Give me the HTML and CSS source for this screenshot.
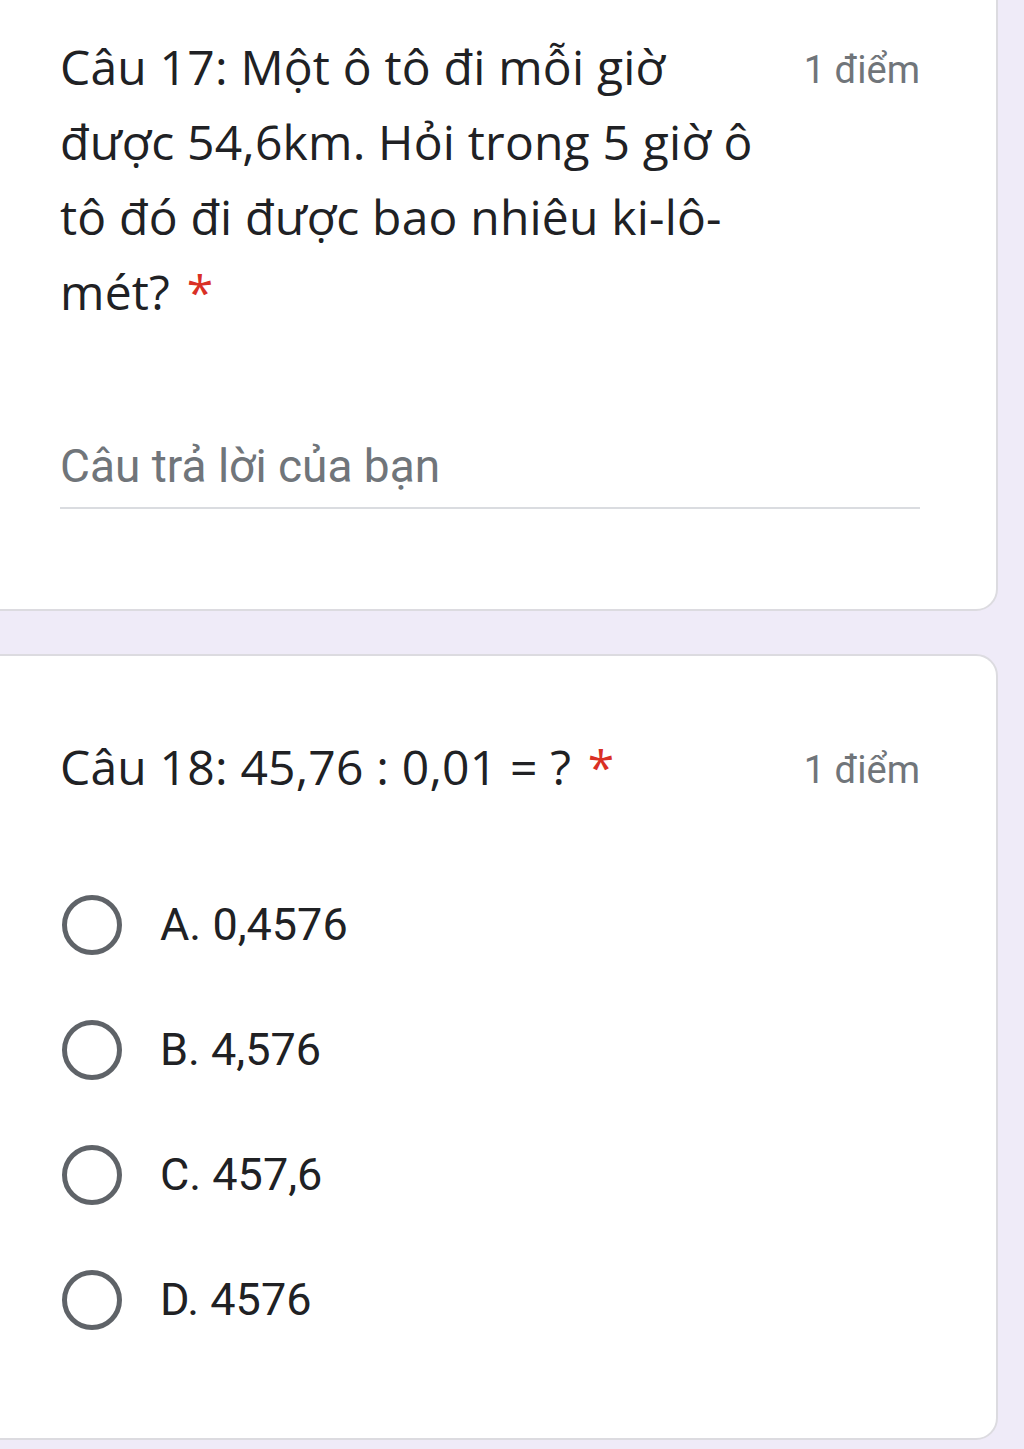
FILE: index.html
```html
<!DOCTYPE html>
<html lang="vi">
<head>
    <meta charset="UTF-8">
    <meta name="viewport" content="width=device-width, initial-scale=1.0">
    <title>Bài kiểm tra</title>
    <link rel="stylesheet" href="styles.css">
</head>
<body>
    <div class="form-list">
        <div class="question-card first">
            <div class="question-head">
                <div class="question-title">Câu 17: Một ô tô đi mỗi giờ được 54,6km. Hỏi trong 5 giờ ô tô đó đi được bao nhiêu ki-lô-mét? <span class="required">*</span></div>
                <div class="points">1 điểm</div>
            </div>
            <div class="answer-input">Câu trả lời của bạn</div>
        </div>

        <div class="question-card second">
            <div class="question-head">
                <div class="question-title">Câu 18: 45,76 : 0,01 = ? <span class="required">*</span></div>
                <div class="points">1 điểm</div>
            </div>
            <div class="options">
                <label class="option"><span class="radio"></span>A. 0,4576</label>
                <label class="option"><span class="radio"></span>B. 4,576</label>
                <label class="option"><span class="radio"></span>C. 457,6</label>
                <label class="option"><span class="radio"></span>D. 4576</label>
            </div>
        </div>
    </div>
</body>
</html>
```

FILE: styles.css
```css
body {
    margin: 0;
    background: #efebf8;
    font-family: Roboto, "Noto Sans", sans-serif;
    overflow: hidden;
}

.form-list {
    display: flex;
    flex-direction: column;
    gap: 43px;
    margin-left: -20px;
    width: 1018px;
}

.question-card {
    background: #fff;
    border: 2px solid #dcdbe0;
    border-radius: 22px;
    padding: 73px 76px 106px 78px;
}

.question-card.first {
    margin-top: -40px;
    padding-top: 67px;
    padding-bottom: 100px;
}

.question-head {
    display: flex;
    align-items: flex-start;
    justify-content: space-between;
}

.question-title {
    font-family: "Open Sans", Roboto, sans-serif;
    font-size: 48px;
    line-height: 75px;
    color: #202124;
    width: 730px;
    letter-spacing: 0.2px;
}

.required {
    color: #d93025;
    margin-left: 4px;
}

.points {
    padding-top: 4px;
    font-size: 38px;
    line-height: 75px;
    color: #70757a;
    white-space: nowrap;
}

.answer-input {
    margin-top: 107px;
    font-size: 46px;
    line-height: 60px;
    color: #70757a;
    padding-bottom: 11px;
    border-bottom: 2px solid #dadce0;
}

.options {
    margin-top: 85px;
    display: flex;
    flex-direction: column;
    gap: 61px;
}

.option {
    display: flex;
    align-items: center;
    gap: 38px;
    padding-left: 2px;
    font-size: 45px;
    line-height: 64px;
    color: #202124;
}

.radio {
    width: 50px;
    height: 50px;
    border: 5px solid #5f6368;
    border-radius: 50%;
    flex-shrink: 0;
}
```
